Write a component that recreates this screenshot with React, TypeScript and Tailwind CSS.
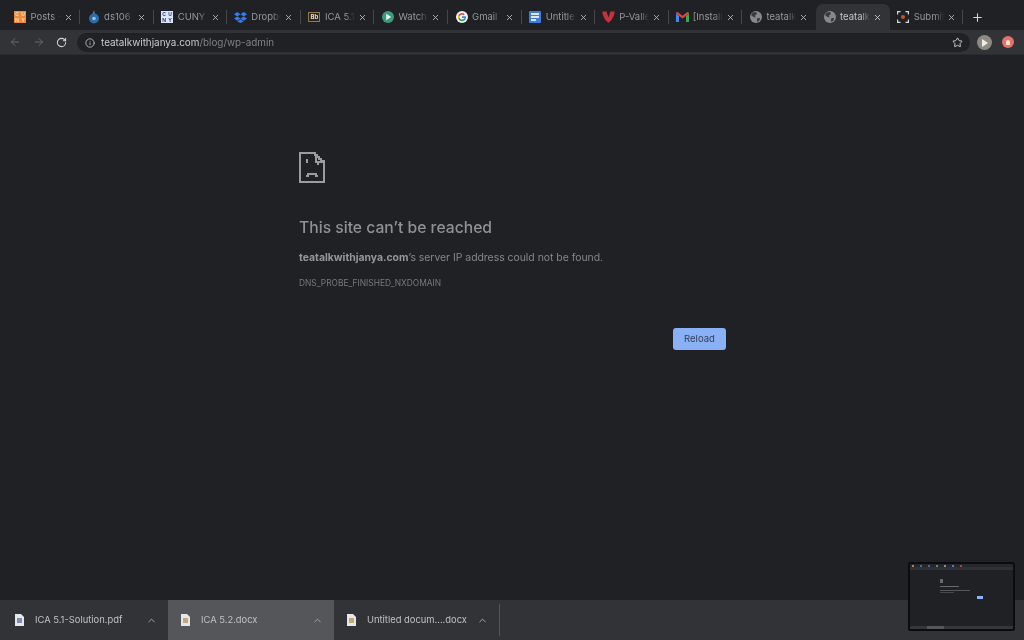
import React from 'react';
import { ArrowLeft, ArrowRight, ChevronUp, Info, Plus, RotateCw, Star, X } from 'lucide-react';

const GlobeIcon = () => (
  <svg width="12" height="12" viewBox="0 0 12 12">
    <circle cx="6" cy="6" r="6" fill="#85888c" />
    <path d="M2.500 1.500 L6 1 L7 3 L5 4.500 L5.500 6.500 L3.500 6 L1 4 Z M7.500 7 L10 7 L9.500 9.500 L7.500 11 L6.800 9 Z" fill="#3a3b3f" />
  </svg>
);

const favicons: Record<string, React.ReactNode> = {
  posts: (
    <div className="w-[12px] h-[12px] bg-[#ee8b3a] grid grid-cols-2 text-[5px] leading-[6px] font-bold text-[#f6dcc0] text-center">
      <span>C</span><span>U</span><span>N</span><span>Y</span>
    </div>
  ),
  ds106: (
    <svg width="12" height="14" viewBox="0 0 12 14">
      <path d="M6 0 L7 4 L4.500 4 Z" fill="#5a7d9a" />
      <circle cx="6" cy="8.500" r="5" fill="#2d6ca8" />
      <circle cx="6" cy="8.500" r="1.800" fill="#9fc2dc" />
    </svg>
  ),
  cuny: (
    <div className="w-[12px] h-[12px] bg-[#dfe6f2] grid grid-cols-2 text-[5px] leading-[6px] font-bold text-[#23408e] text-center">
      <span>C</span><span>U</span><span>N</span><span>Y</span>
    </div>
  ),
  dropbox: (
    <svg width="13" height="11" viewBox="0 0 24 20" fill="#2f7cf6">
      <path d="M6 0 12 4 6 8 0 4Z M18 0 24 4 18 8 12 4Z M6 8 12 12 6 16 0 12Z M18 8 24 12 18 16 12 12Z M6 17.200 12 13.200 18 17.200 12 20Z" />
    </svg>
  ),
  ica: (
    <div className="w-[12px] h-[10px] bg-[#2b2720] border border-[#8a7a4c] flex items-center justify-center text-[6px] leading-none font-bold text-[#e3dcc4]">
      Bb
    </div>
  ),
  watch: (
    <svg width="12" height="12" viewBox="0 0 12 12">
      <circle cx="6" cy="6" r="6" fill="#3f9a7c" />
      <path d="M4.200 2.800 9.200 6 4.200 9.200Z" fill="#e6f3ee" />
    </svg>
  ),
  google: (
    <svg width="12" height="12" viewBox="0 0 48 48">
      <circle cx="24" cy="24" r="24" fill="#f1f3f4" />
      <path fill="#4285f4" d="M40 24.500c0-1.200-.1-2.300-.3-3.400H24v6.400h9c-.4 2.100-1.600 3.800-3.300 5v4.200h5.300C38.200 33.800 40 29.600 40 24.500z" />
      <path fill="#34a853" d="M24 40.500c4.500 0 8.200-1.500 11-4l-5.300-4.200c-1.500 1-3.400 1.600-5.700 1.600-4.300 0-8-2.900-9.300-6.900H9.200v4.300C11.900 36.800 17.500 40.500 24 40.500z" />
      <path fill="#fbbc05" d="M14.700 27c-.7-2-.7-4.100 0-6.100v-4.300H9.200a16.500 16.500 0 0 0 0 14.700z" />
      <path fill="#ea4335" d="M24 14c2.400 0 4.600.8 6.300 2.500l4.700-4.700C32.200 9.100 28.500 7.500 24 7.500c-6.500 0-12.100 3.700-14.800 9.100l5.500 4.300C16 16.900 19.700 14 24 14z" />
    </svg>
  ),
  docs: (
    <div className="w-[12px] h-[12px] rounded-[1px] bg-[#3f7ce0] flex flex-col justify-center gap-[1.500px] px-[2px]">
      <div className="h-[1.500px] bg-[#dbe6fa]" />
      <div className="h-[1.500px] bg-[#dbe6fa]" />
      <div className="h-[1.500px] w-[5px] bg-[#dbe6fa]" />
    </div>
  ),
  vimeo: (
    <svg width="13" height="12" viewBox="0 0 13 12">
      <path d="M0.500 0.500 H4.500 L6.500 6.500 L8.500 0.500 H12.500 C12.800 4 10 9.500 6.500 11.800 C3 9.500 0.200 4 0.500 0.500Z" fill="#c8313a" />
    </svg>
  ),
  gmail: (
    <svg width="13" height="10" viewBox="0 0 13 10">
      <path d="M0 1.500 V10 H3 V4 Z" fill="#4285f4" />
      <path d="M13 1.500 V10 H10 V4 Z" fill="#34a853" />
      <path d="M0 1.500 C0 0.200 1.200 -0.300 2 0.300 L6.500 3.800 L11 0.300 C11.800 -0.300 13 0.200 13 1.500 L10 4 L6.500 6.600 L3 4Z" fill="#d9453a" />
    </svg>
  ),
  globe: <GlobeIcon />,
  submit: (
    <svg width="12" height="12" viewBox="0 0 12 12" fill="none" stroke="#d8d8d8" strokeWidth="1.200">
      <path d="M0.600 3.500 V0.600 H3.500 M8.500 0.600 H11.400 V3.500 M11.400 8.500 V11.400 H8.500 M3.500 11.400 H0.600 V8.500" />
      <circle cx="6" cy="6" r="2" fill="#c8562a" stroke="none" />
    </svg>
  ),
};

const tabs = [
  { icon: 'posts', title: 'Posts - T' },
  { icon: 'ds106', title: 'ds106 A' },
  { icon: 'cuny', title: 'CUNY A' },
  { icon: 'dropbox', title: 'Dropbo' },
  { icon: 'ica', title: 'ICA 5.1' },
  { icon: 'watch', title: 'Watch P' },
  { icon: 'google', title: 'Gmail' },
  { icon: 'docs', title: 'Untitled' },
  { icon: 'vimeo', title: 'P-Valle' },
  { icon: 'gmail', title: '[Install' },
  { icon: 'globe', title: 'teatalk' },
  { icon: 'globe', title: 'teatalk', active: true },
  { icon: 'submit', title: 'Submit' },
];

const downloads = [
  { name: 'ICA 5.1-Solution.pdf', w: 'w-[168px]', pl: 'pl-[15px]', pdf: true },
  { name: 'ICA 5.2.docx', w: 'w-[166px]', pl: 'pl-[13px]', active: true },
  { name: 'Untitled docum....docx', w: 'w-[165px]', pl: 'pl-[13px]' },
];

const Tab = ({ icon, title, active, hideSep }: { icon: string; title: string; active?: boolean; hideSep?: boolean }) => (
  <div className={`relative w-[73.600px] h-[26px] flex items-center shrink-0 pl-[7px] rounded-t-[7px] ${active ? 'bg-[#323336]' : ''}`}>
    <div className="w-[13px] flex items-center justify-center shrink-0">{favicons[icon]}</div>
    <span
      className={`ml-[4px] w-[30px] overflow-hidden whitespace-nowrap text-[9.500px] [mask-image:linear-gradient(to_right,black_70%,transparent)] ${active ? 'text-[#c4c6c9]' : 'text-[#96989c]'}`}
    >
      {title}
    </span>
    <X size={9} strokeWidth={2.200} className={`ml-[3px] shrink-0 ${active ? 'text-[#d4d5d7]' : 'text-[#c2c3c5]'}`} />
    {!active && !hideSep && <div className="absolute right-0 top-[6px] h-[14px] w-px bg-[#46474b]" />}
  </div>
);

const SadPage = () => (
  <svg width="26" height="31" viewBox="0 0 26 31" fill="none" stroke="#9a9c9f" strokeWidth="2" shapeRendering="crispEdges">
    <path d="M1 1 H16 V3 H18 V5 H20 V7 H22 V9 H25 V30 H1 Z" />
    <path d="M17 3 V10 H24" />
    <path d="M8 7 V11 M19 11 V13" />
    <path d="M7 24 H9 V22 H17 V24 H19" />
  </svg>
);

const DocIcon = ({ pdf }: { pdf?: boolean }) => (
  <svg width="9" height="12" viewBox="0 0 9 12">
    <path d="M0 0 H6 L9 3 V12 H0Z" fill="#e6e7e8" />
    <rect x="2" y="4" width="5" height="5" fill={pdf ? '#7d8fae' : '#c2a878'} />
  </svg>
);

// miniature copy of this same page, shown as the screenshot preview
const Thumbnail = () => (
  <div className="absolute left-[908px] top-[562px] w-[107px] h-[69px] border-[2px] border-[#0c0c0d] rounded-[2px] bg-[#202124] overflow-hidden flex flex-col">
    <div className="h-[3px] bg-[#26272a] shrink-0 flex items-center gap-[6px] pl-[2px]">
      <div className="w-[2px] h-[2px] bg-[#c07a3a]" />
      <div className="w-[2px] h-[2px] bg-[#4a6a9a]" />
      <div className="w-[2px] h-[2px] bg-[#4a6a9a]" />
      <div className="w-[2px] h-[2px] bg-[#3f9a7c]" />
      <div className="w-[2px] h-[2px] bg-[#8a8c90]" />
      <div className="w-[2px] h-[2px] bg-[#3f7ce0]" />
      <div className="w-[2px] h-[2px] bg-[#a84040]" />
    </div>
    <div className="h-[3px] bg-[#303134] shrink-0" />
    <div className="flex-1 pl-[30px] pt-[9px] relative">
      <div className="w-[3px] h-[4px] bg-[#66686b]" />
      <div className="w-[19px] h-[1px] bg-[#66686b] mt-[3px]" />
      <div className="w-[30px] h-[1px] bg-[#55575a] mt-[3px]" />
      <div className="w-[14px] h-[1px] bg-[#45474a] mt-[1px]" />
      <div className="absolute left-[67px] top-[26px] w-[6px] h-[3px] bg-[#8ab4f8]" />
    </div>
    <div className="h-[3px] bg-[#35363a] shrink-0 flex">
      <div className="w-[17px]" />
      <div className="w-[17px] bg-[#55565a]" />
    </div>
  </div>
);

export default function App() {
  return (
    <div className="relative w-[1024px] h-[640px] overflow-hidden flex flex-col bg-[#202124] blur-[0.35px] font-['Inter','Liberation_Sans',sans-serif]">
      {/* Tab strip */}
      <div className="h-[30px] bg-[#202124] flex items-end pl-[6.500px] shrink-0">
        {tabs.map((t, i) => (
          <Tab key={i} icon={t.icon} title={t.title} active={t.active} hideSep={tabs[i + 1]?.active} />
        ))}
        <Plus size={13} strokeWidth={2} className="text-[#d4d5d7] ml-[8px] mb-[6px]" />
      </div>

      {/* Toolbar */}
      <div className="h-[24px] bg-[#323336] flex items-start shrink-0 pt-[3px]">
        <ArrowLeft size={12} strokeWidth={2} className="ml-[9px] mt-[3px] text-[#66686b]" />
        <ArrowRight size={12} strokeWidth={2} className="ml-[12px] mt-[3px] text-[#66686b]" />
        <RotateCw size={11} strokeWidth={2.200} className="ml-[11px] mt-[4px] text-[#d4d5d7]" />
        <div className="ml-[10px] w-[893px] h-[19px] rounded-full bg-[#202124] flex items-center pl-[8px] pr-[7px]">
          <Info size={10} strokeWidth={2} className="text-[#c4c6c9]" />
          <span className="ml-[6px] text-[9.900px] text-[#c9cbcd]">
            teatalkwithjanya.com<span className="text-[#7f8185]">/blog/wp-admin</span>
          </span>
          <Star size={11} strokeWidth={2} className="ml-auto text-[#d4d5d7]" />
        </div>
        <div className="ml-[7px] mt-[2px] w-[15px] h-[15px] rounded-full bg-[#8f8a80] flex items-center justify-center">
          <div className="w-0 h-0 border-y-[4px] border-y-transparent border-l-[6px] border-l-[#eeeeee]" />
        </div>
        <div className="ml-[10px] mt-[3px] w-[12px] h-[12px] rounded-full bg-[#e2736b] flex items-center justify-center">
          <div className="w-[4px] h-[5px] bg-[#f6d8d4] rounded-t-[2px]" />
        </div>
      </div>

      {/* Error page */}
      <main className="flex-1 bg-[#202124] pl-[299px] pt-[97px] border-t border-[#2b2c2f]">
        <SadPage />
        <h1 className="mt-[34px] text-[15.700px] leading-[22px] font-medium text-[#8f9194]">This site can’t be reached</h1>
        <p className="mt-[11px] text-[10.400px] leading-[16px] text-[#85878a]">
          <span className="font-bold text-[#94969a]">teatalkwithjanya.com</span>’s server IP address could not be found.
        </p>
        <p className="mt-[11px] text-[8.400px] leading-[12px] text-[#77797c]">DNS_PROBE_FINISHED_NXDOMAIN</p>
        <button className="block ml-[374px] mt-[39px] w-[53px] h-[22px] rounded-[3px] bg-[#8ab0f5] text-[9.500px] text-[#33415c]">
          Reload
        </button>
      </main>

      {/* Download shelf */}
      <div className="h-[40px] bg-[#323336] flex items-stretch shrink-0">
        {downloads.map((d, i) => (
          <div key={i} className={`${d.w} ${d.pl} flex items-center ${d.active ? 'bg-[#55565a]' : ''}`}>
            <DocIcon pdf={d.pdf} />
            <span className="ml-[11px] pt-[1px] text-[9.400px] text-[#bfc1c3] whitespace-nowrap">{d.name}</span>
            <ChevronUp size={11} strokeWidth={2} className="ml-auto mr-[11px] text-[#a8aaac]" />
          </div>
        ))}
        <div className="w-px h-[32px] mt-[4px] bg-[#55565a]" />
      </div>

      <Thumbnail />
    </div>
  );
}
